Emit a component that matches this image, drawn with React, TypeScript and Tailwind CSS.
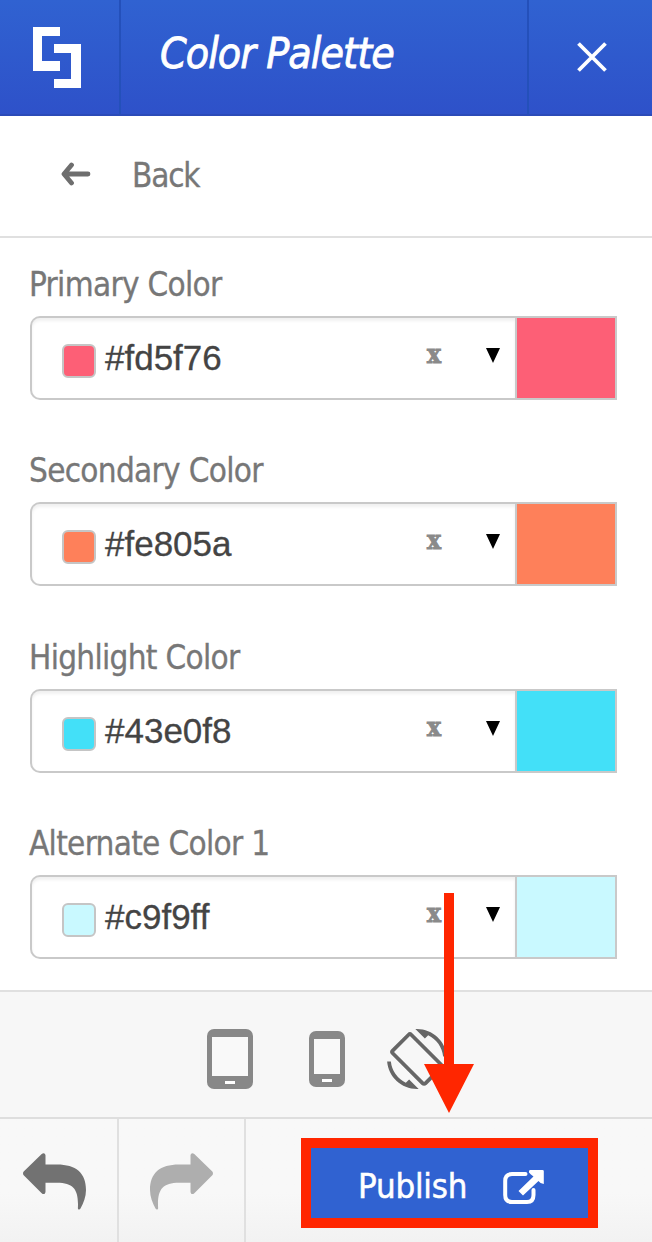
import React from "react";
import { MdScreenRotation } from "react-icons/md";

type Field = { label: string; value: string };

const fields: Field[] = [
  { label: "Primary Color", value: "#fd5f76" },
  { label: "Secondary Color", value: "#fe805a" },
  { label: "Highlight Color", value: "#43e0f8" },
  { label: "Alternate Color 1", value: "#c9f9ff" },
];

function Header() {
  return (
    <header className="flex h-[116px] border-b-2 border-[#2b4bb8] bg-linear-to-b from-[#3062d1] to-[#2e51c9] text-white">
      <div className="flex w-[121px] border-r-2 border-[#2450ba] pt-[27px] pl-[33px]">
        <svg width="48" height="61" viewBox="0 0 48 61" fill="currentColor">
          <path d="M0 0H27V9H9V34H27V44H0Z" />
          <path d="M21 17H48V61H21V52H38V26H21Z" />
        </svg>
      </div>
      <h1 className="w-[408px] border-r-2 border-[#2450ba] pt-[28px] pl-[39px] text-[42.5px] leading-[52px] tracking-[-0.95px] whitespace-nowrap italic [-webkit-text-stroke:0.8px_white]">
        Color Palette
      </h1>
      <button className="flex flex-1 items-start pt-[42px] pl-[48px]" aria-label="Close">
        <svg width="30" height="30" viewBox="0 0 30 30" stroke="currentColor" strokeWidth="3.8">
          <path d="M1.5 1.5L28.5 28.5M28.5 1.5L1.5 28.5" />
        </svg>
      </button>
    </header>
  );
}

function ColorField({ label, value }: Field) {
  return (
    <div className="h-[186.4px] pl-[30px]">
      <div className="-ml-px h-[56px] text-[33px] leading-[50px] tracking-[-0.7px] whitespace-nowrap text-[#777] [-webkit-text-stroke:0.3px_#777]">{label}</div>
      <div className="flex h-[84px] w-[587px]">
        <div className="flex flex-1 rounded-l-[10px] border-2 border-r-0 border-[#c9c9c9] bg-white pl-[30px] shadow-[inset_0_3px_3px_rgba(0,0,0,0.06)]">
          <div className="mt-[26px] h-[34px] w-[34px] rounded-[6px] border-2 border-[#c5c5c5]" style={{ backgroundColor: value }} />
          <div className="mt-[20px] ml-[9px] w-[322px] font-['Liberation_Sans',sans-serif] text-[35px] leading-[40px] text-[#444] [-webkit-text-stroke:0.3px_#444]">
            {value}
          </div>
          <div className="mt-[20px] w-[17px] font-['DejaVu_Serif',serif] text-[26px] leading-[32px] font-bold text-[#8a8a8a] [-webkit-text-stroke:1px_#8a8a8a]">x</div>
          <svg className="mt-[30px] ml-[42px]" width="14" height="15" viewBox="0 0 14 15">
            <path d="M0 0H14L7 15Z" />
          </svg>
        </div>
        <div className="w-[102px] border-2 border-[#c9c9c9]" style={{ backgroundColor: value }} />
      </div>
    </div>
  );
}

function Devices() {
  return (
    <div className="flex h-[127px] items-start border-t-2 border-[#e0e0e0] bg-[#f7f7f7] pl-[207px]">
      <svg className="mt-[37px]" width="46" height="60" viewBox="0 0 46 60">
        <rect width="46" height="60" rx="7" fill="#888" />
        <path d="M5 8H41V47H5Z" fill="#f9f9f9" />
        <path d="M18 52H28V55H18Z" fill="#fff" />
      </svg>
      <svg className="mt-[39px] ml-[56px]" width="36" height="56" viewBox="0 0 36 56">
        <rect width="36" height="56" rx="7" fill="#888" />
        <path d="M5 8H31V43H5Z" fill="#f9f9f9" />
        <path d="M13 48H23V51H13Z" fill="#fff" />
      </svg>
      <MdScreenRotation className="mt-[37px] ml-[42px] text-[60px] text-[#666]" />
    </div>
  );
}

function CurvedArrow({ className }: { className: string }) {
  return (
    <svg className={className} width="63" height="57" viewBox="0 0 63 57" fill="currentColor">
      <path d="M.7 18.6L18.7 1.1C20.5-.6 22.5.2 22.5 2.6V11.6H34C53 11.6 63 20 63 37C63 44 60.5 50 57.5 55.5C56.7 57 54.8 56.8 54.9 55C55.8 37 51 29.8 34 29.8H22.5V38.4C22.5 40.9 20.5 41.9 18.7 40.2L.7 22.2C-.2 21.2-.2 19.6.7 18.6Z" />
    </svg>
  );
}

function Actions() {
  return (
    <footer className="flex h-[125px] border-t-2 border-[#dedede] bg-linear-to-b from-[#f8f8f8] from-60% to-[#f2f2f2]">
      <div className="w-[119px] border-r-2 border-[#e0e0e0] pt-[34px] pl-[23px] text-[#727272]">
        <CurvedArrow className="block" />
      </div>
      <div className="w-[127px] border-r-2 border-[#e0e0e0] pt-[34px] pl-[31px] text-[#aeaeae]">
        <CurvedArrow className="block -scale-x-100" />
      </div>
      <button className="mt-[19px] ml-[55px] flex h-[90px] w-[297px] items-start border-[10px] border-[#ff2600] bg-[#3062d1] pl-[47px] text-white">
        <span className="mt-[12px] w-[145px] text-left text-[34.5px] leading-[52px] tracking-[-0.2px] [-webkit-text-stroke:0.5px_white]">Publish</span>
        <svg className="mt-[21px]" width="41" height="36" viewBox="0 0 41 36" fill="none" stroke="currentColor" strokeLinecap="round">
          <path strokeWidth="4" d="M22.5 5H9Q2.2 5 2.2 12V26Q2.2 33 9 33H24Q30.5 33 30.5 26V21" />
          <path fill="currentColor" stroke="none" d="M27 1H39.5Q40.8 1 40.8 2.3V15Q37.5 15 35.5 12L20 26.5L15.5 22L30.5 7.5Q27 5 26 3.5Q25.5 1 27 1Z" />
        </svg>
      </button>
    </footer>
  );
}

export default function App() {
  return (
    <div className="relative flex h-[1242px] w-[652px] flex-col overflow-hidden bg-white font-['DejaVu_Sans_Condensed','DejaVu_Sans',sans-serif] font-stretch-condensed">
      <Header />
      <nav className="flex h-[122px] items-start border-b-2 border-[#e0e0e0] pl-[61px] text-[#777]">
        <svg className="mt-[46px]" width="30" height="24" viewBox="0 0 30 24" fill="none" stroke="#6e6e6e" strokeWidth="4.8" strokeLinecap="round" strokeLinejoin="round">
          <path d="M10.5 3L3 12L10.5 21M4 12H27" />
        </svg>
        <span className="mt-[36px] ml-[41px] text-[33px] leading-[48px] tracking-[-1.2px] [-webkit-text-stroke:0.3px_#777]">Back</span>
      </nav>
      <main className="h-[752px] overflow-hidden pt-[22px]">
        {fields.map((field) => (
          <ColorField key={field.label} {...field} />
        ))}
      </main>
      <Devices />
      <Actions />
      <svg className="absolute top-[893px] left-[424px]" width="50" height="220" viewBox="0 0 50 220" fill="#ff2600">
        <path d="M20 0H30V171H50L25 220L0 171H20Z" />
      </svg>
    </div>
  );
}
